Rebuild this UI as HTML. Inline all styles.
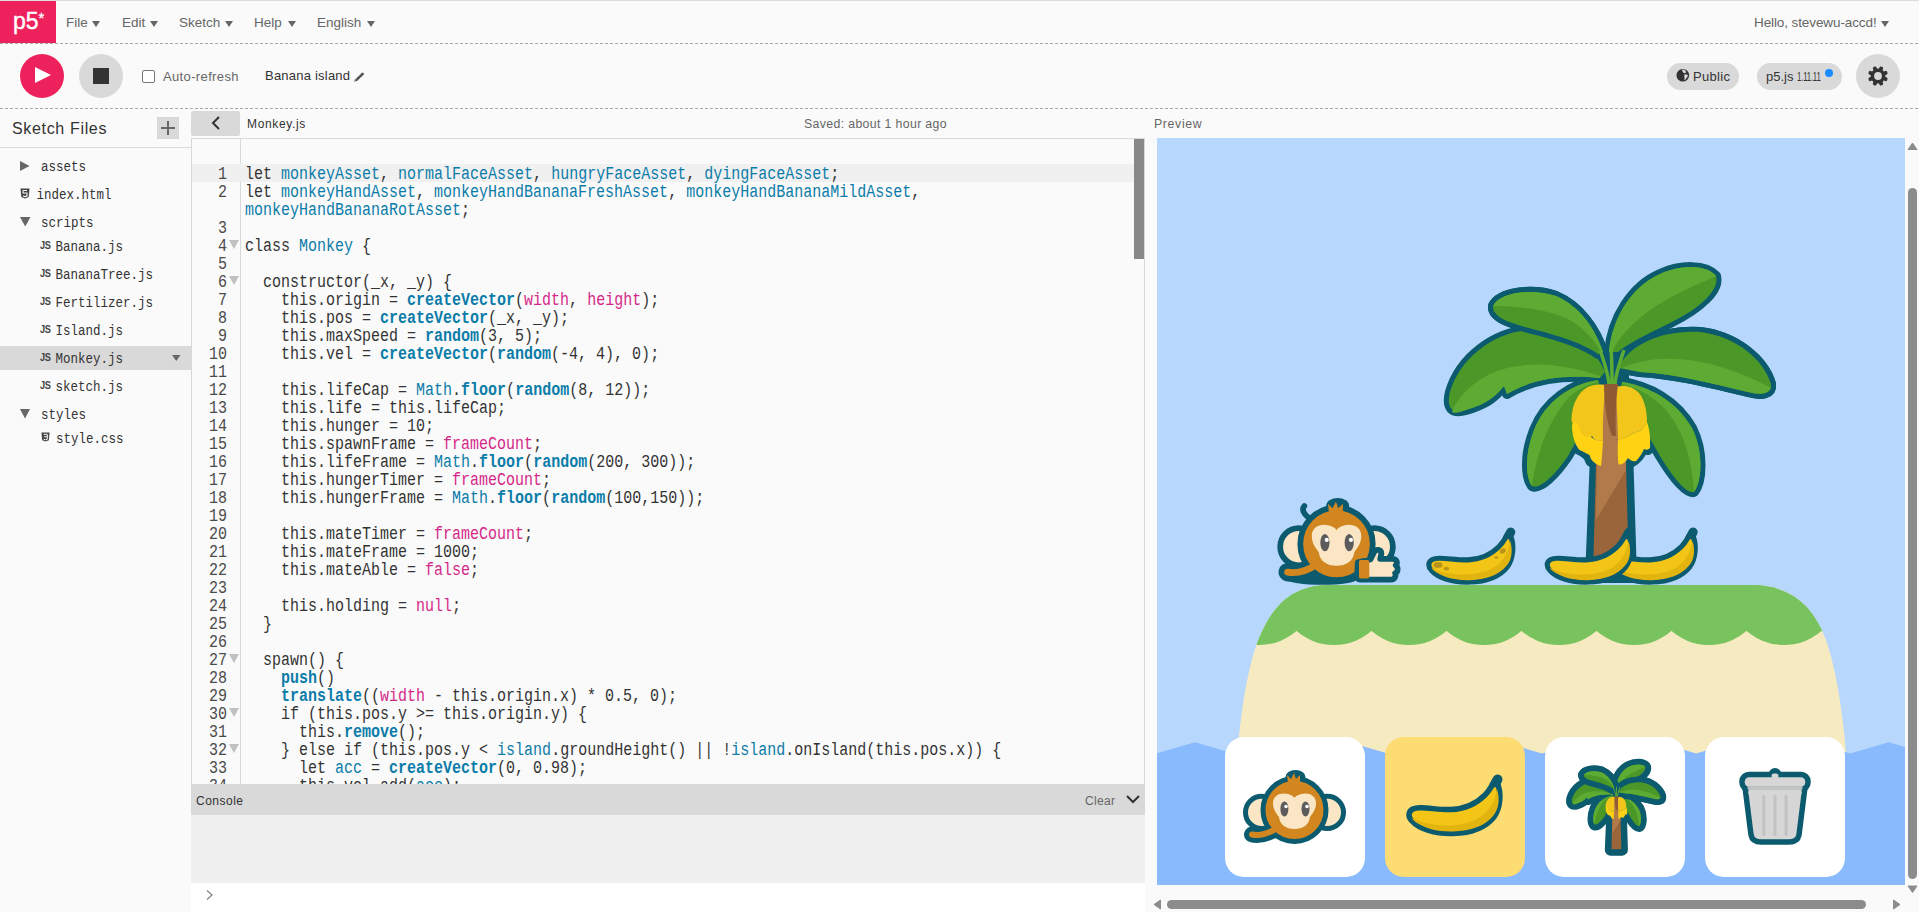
<!DOCTYPE html>
<html><head><meta charset="utf-8">
<style>
*{box-sizing:border-box;margin:0;padding:0}
html,body{width:1919px;height:912px;overflow:hidden;background:#fafafa;font-family:"Liberation Sans",sans-serif;color:#333}
.a{position:absolute}
.t{position:absolute;white-space:nowrap;line-height:1}
.tri{position:absolute;width:0;height:0;border-left:4.5px solid transparent;border-right:4.5px solid transparent;border-top:6.5px solid #666}
.dash{position:absolute;left:0;width:1919px;height:1px;background-image:linear-gradient(to right,#a6a6a6 0,#a6a6a6 3px,transparent 3px,transparent 5px);background-size:5px 1px}
.code{position:absolute;left:245px;font-family:"Liberation Mono",monospace;font-size:15px;line-height:18px;white-space:pre;color:#333}
.code div{height:18px}
.code span.in{display:inline-block;transform:scaleY(1.2);transform-origin:0 13px}
.code i,.code b{font-style:normal}
.k{color:#333}
.d{color:#0b7ca9}
.f{color:#0b7ca9;font-weight:bold}
.p{color:#d52889}
.gut{position:absolute;left:192px;width:48px;font-family:"Liberation Mono",monospace;font-size:15px;line-height:18px;white-space:pre;color:#4a4a4a;text-align:right}
.gut div{height:18px;padding-right:13px;position:relative}
.gut span.in{display:inline-block;transform:scaleY(1.2);transform-origin:0 13px}
.fold{position:absolute;left:37px;top:1px;width:0;height:0;border-left:5px solid transparent;border-right:5px solid transparent;border-top:9.5px solid #c0c0c0}
.jsi{position:absolute;font-family:"Liberation Sans",sans-serif;font-weight:bold;font-size:11.5px;line-height:1;color:#444;letter-spacing:-0.6px;transform:scaleX(0.8);transform-origin:0 0}
.fi{transform:scaleY(1.1);transform-origin:0 9.6px;position:absolute;font-family:"Liberation Mono",monospace;font-size:12.5px;line-height:1;white-space:pre;color:#333}
</style></head><body>
<!-- top line -->
<div class="a" style="left:0;top:0;width:1919px;height:1px;background:#dcdcdc"></div>
<!-- logo -->
<div class="a" style="left:0;top:1px;width:56px;height:42px;background:#ed225d"></div>
<div class="t" style="left:13px;top:10px;font-size:23px;color:#fff;-webkit-text-stroke:0.4px #fff">p5</div>
<div class="t" style="left:38.5px;top:10px;font-size:15px;color:#fff;-webkit-text-stroke:0.3px #fff">*</div>
<!-- nav -->
<div class="t" style="left:66px;top:16px;font-size:13.5px;color:#666">File</div><div class="tri" style="left:92px;top:21px"></div>
<div class="t" style="left:122px;top:16px;font-size:13.5px;color:#666">Edit</div><div class="tri" style="left:150px;top:21px"></div>
<div class="t" style="left:179px;top:16px;font-size:13.5px;color:#666">Sketch</div><div class="tri" style="left:225px;top:21px"></div>
<div class="t" style="left:254px;top:16px;font-size:13.5px;color:#666">Help</div><div class="tri" style="left:288px;top:21px"></div>
<div class="t" style="left:317px;top:16px;font-size:13.5px;color:#666">English</div><div class="tri" style="left:367px;top:21px"></div>
<div class="t" style="left:1754px;top:16px;font-size:13.5px;letter-spacing:-0.1px;color:#666">Hello, stevewu-accd!</div><div class="tri" style="left:1881px;top:21px"></div>
<div class="dash" style="top:43px"></div>
<!-- toolbar -->
<div class="a" style="left:20px;top:54px;width:44px;height:44px;border-radius:50%;background:#ed225d"></div>
<svg class="a" style="left:35px;top:67px" width="18" height="18"><path d="M0 0 L16 8 L0 16Z" fill="#fff"/></svg>
<div class="a" style="left:79px;top:54px;width:44px;height:44px;border-radius:50%;background:#d9d9d9"></div>
<div class="a" style="left:93px;top:68px;width:16px;height:16px;background:#333"></div>
<div class="a" style="left:142px;top:70px;width:13px;height:13px;border:1px solid #767676;border-radius:2px;background:#fff"></div>
<div class="t" style="left:163px;top:70px;font-size:13px;letter-spacing:0.36px;color:#666">Auto-refresh</div>
<div class="t" style="left:265px;top:69px;font-size:13px;letter-spacing:0.22px;color:#333">Banana island</div>
<svg class="a" style="left:352px;top:70px" width="14" height="13" viewBox="0 0 14 13"><path d="M3.2 9.2 L10.4 2.2 L12.2 4 L5 11 L2 11.6 Z" fill="#444"/><path d="M4.2 9 L10.6 2.8 M3.4 10.6 L3.6 9.6" stroke="#fafafa" stroke-width="0.7" fill="none" stroke-dasharray="1 1"/></svg>
<div class="a" style="left:1667px;top:63px;width:72px;height:27px;border-radius:14px;background:#d9d9d9"></div>
<svg class="a" style="left:1676px;top:69px" width="14" height="14" viewBox="0 0 14 14"><circle cx="6.8" cy="6.3" r="6.3" fill="#333"/><path d="M6 0.8 L7.5 0.6 L9.5 1.8 L10.2 3.4 L8.6 4.2 L7.4 3.8 L6.6 2.6 Z M8.6 5.3 L10.6 5.6 L12 6.3 L11.2 8.2 L9.6 10.2 L8.2 11.5 L8.6 9.2 L8.2 7.4 Z" fill="#d9d9d9"/></svg>
<div class="t" style="left:1693px;top:70px;font-size:13px;letter-spacing:0.3px;color:#333">Public</div>
<div class="a" style="left:1757px;top:63px;width:85px;height:27px;border-radius:14px;background:#d9d9d9"></div>
<div class="t" style="left:1766px;top:70px;font-size:13px;color:#333">p5.js <span style="display:inline-block;transform:scaleX(0.6);transform-origin:0 0;letter-spacing:-0.3px">1.11.11</span></div>
<div class="a" style="left:1825px;top:69px;width:8px;height:8px;border-radius:50%;background:#1a8cff"></div>
<div class="a" style="left:1856px;top:54px;width:44px;height:44px;border-radius:50%;background:#d9d9d9"></div>
<svg class="a" style="left:1866px;top:64px" width="24" height="24" viewBox="-12 -12 24 24"><g fill="#333"><rect x="-1.9" y="-10" width="3.8" height="6" rx="1.3" transform="rotate(22.5)"/><rect x="-1.9" y="-10" width="3.8" height="6" rx="1.3" transform="rotate(67.5)"/><rect x="-1.9" y="-10" width="3.8" height="6" rx="1.3" transform="rotate(112.5)"/><rect x="-1.9" y="-10" width="3.8" height="6" rx="1.3" transform="rotate(157.5)"/><rect x="-1.9" y="-10" width="3.8" height="6" rx="1.3" transform="rotate(202.5)"/><rect x="-1.9" y="-10" width="3.8" height="6" rx="1.3" transform="rotate(247.5)"/><rect x="-1.9" y="-10" width="3.8" height="6" rx="1.3" transform="rotate(292.5)"/><rect x="-1.9" y="-10" width="3.8" height="6" rx="1.3" transform="rotate(337.5)"/><circle r="7.4"/></g><circle r="3.9" fill="#d9d9d9"/></svg>
<div class="dash" style="top:108px"></div>

<!-- sidebar -->
<div class="t" style="left:12px;top:121px;font-size:16px;letter-spacing:0.66px;color:#333">Sketch Files</div>
<div class="a" style="left:157px;top:117px;width:22px;height:22px;background:#d9d9d9"></div>
<div class="a" style="left:161px;top:127px;width:14px;height:2px;background:#666"></div>
<div class="a" style="left:167px;top:121px;width:2px;height:14px;background:#666"></div>
<div class="a" style="left:0;top:147px;width:191px;height:1px;background:#d9d9d9"></div>
<div class="a" style="left:191px;top:138px;width:1px;height:774px;background:#e6e6e6"></div>
<div class="a" style="left:0;top:346px;width:191px;height:24px;background:#d9d9d9"></div>

<!-- editor header -->
<div class="a" style="left:191px;top:111px;width:49px;height:25px;border-radius:2px;background:#d9d9d9"></div>
<svg class="a" style="left:210px;top:115px" width="14" height="16"><path d="M9 2 L3 8 L9 14" fill="none" stroke="#333" stroke-width="2"/></svg>
<div class="t" style="left:247px;top:118px;font-size:12px;letter-spacing:0.65px;color:#333">Monkey.js</div>
<div class="t" style="left:804px;top:118px;font-size:12.3px;letter-spacing:0.36px;color:#666">Saved: about 1 hour ago</div>
<div class="t" style="left:1154px;top:118px;font-size:12.3px;letter-spacing:0.65px;color:#666">Preview</div>

<!-- editor -->
<div class="a" style="left:191px;top:138px;width:954px;height:646px;border:1px solid #d9d9d9;border-bottom:none;background:#fafafa;overflow:hidden" id="ed"></div>
<div class="a" style="left:240px;top:139px;width:1px;height:645px;background:#d9d9d9"></div>
<div class="a" style="left:192px;top:164px;width:942px;height:18px;background:#f0f0f0"></div>
<div class="a" style="left:1134px;top:139px;width:10px;height:120px;background:#888"></div>

<!-- console -->
<div class="a" style="left:191px;top:784px;width:954px;height:31px;background:#d9d9d9"></div>
<div class="t" style="left:196px;top:795px;font-size:12px;letter-spacing:0.5px;color:#333">Console</div>
<div class="t" style="left:1085px;top:795px;font-size:12px;letter-spacing:0.3px;color:#666">Clear</div>
<svg class="a" style="left:1125px;top:794px" width="16" height="12"><path d="M2 2 L8 8 L14 2" fill="none" stroke="#333" stroke-width="2"/></svg>
<div class="a" style="left:191px;top:815px;width:954px;height:68px;background:#f0f0f0"></div>
<div class="a" style="left:191px;top:883px;width:954px;height:29px;background:#fff"></div>
<svg class="a" style="left:205px;top:889px" width="10" height="12"><path d="M2 1.5 L7 6 L2 10.5" fill="none" stroke="#888" stroke-width="1.3"/></svg>

<!-- SIDE -->
<svg class="a" style="left:20px;top:161px" width="10" height="10"><path d="M0 0 L9.5 5 L0 10Z" fill="#666"/></svg>
<div class="fi" style="left:41px;top:162.1px">assets</div>
<svg class="a" style="left:20px;top:188px" width="10" height="11" viewBox="0 0 10 11"><path d="M0.5 0.5 H9.5 L8.7 9 L5 10.5 L1.3 9 Z" fill="#444"/><path d="M3 2.5 H7 M3 2.5 V5 H7 V8 L5 8.6 L3 8" fill="none" stroke="#fafafa" stroke-width="1.1"/></svg>
<div class="fi" style="left:36.5px;top:190.0px">index.html</div>
<svg class="a" style="left:20px;top:217px" width="11" height="10"><path d="M0 0 L10.5 0 L5.25 9.5Z" fill="#666"/></svg>
<div class="fi" style="left:41px;top:218.1px">scripts</div>
<div class="jsi" style="left:40px;top:240px">JS</div><div class="fi" style="left:55.5px;top:242.0px">Banana.js</div>
<div class="jsi" style="left:40px;top:268px">JS</div><div class="fi" style="left:55.5px;top:270.0px">BananaTree.js</div>
<div class="jsi" style="left:40px;top:296px">JS</div><div class="fi" style="left:55.5px;top:298.0px">Fertilizer.js</div>
<div class="jsi" style="left:40px;top:324px">JS</div><div class="fi" style="left:55.5px;top:326.0px">Island.js</div>
<div class="jsi" style="left:40px;top:352px">JS</div><div class="fi" style="left:55.5px;top:354.0px">Monkey.js</div>
<svg class="a" style="left:172px;top:355px" width="9" height="6"><path d="M0 0 L8.5 0 L4.25 6Z" fill="#666"/></svg>
<div class="jsi" style="left:40px;top:380px">JS</div><div class="fi" style="left:55.5px;top:382.0px">sketch.js</div>
<svg class="a" style="left:20px;top:409px" width="11" height="10"><path d="M0 0 L10 0 L5 9.5Z" fill="#666"/></svg>
<div class="fi" style="left:41px;top:410.2px">styles</div>
<svg class="a" style="left:40.5px;top:432px" width="9" height="10" viewBox="0 0 10 11"><path d="M0.5 0.5 H9.5 L8.7 9 L5 10.5 L1.3 9 Z" fill="#444"/><path d="M3 2.5 H7 V8 L5 8.6 L3 8 M3.5 5.2 H7" fill="none" stroke="#fafafa" stroke-width="1.1"/></svg>
<div class="fi" style="left:56px;top:434.0px">style.css</div>
<!-- /SIDE -->
<!-- CODE --><div class="a" style="left:192px;top:139px;width:942px;height:645px;overflow:hidden"><div class="gut" style="left:0;top:28px"><div><span class="in">1</span></div><div><span class="in">2</span></div><div></div><div><span class="in">3</span></div><div><span class="in">4</span><b class="fold"></b></div><div><span class="in">5</span></div><div><span class="in">6</span><b class="fold"></b></div><div><span class="in">7</span></div><div><span class="in">8</span></div><div><span class="in">9</span></div><div><span class="in">10</span></div><div><span class="in">11</span></div><div><span class="in">12</span></div><div><span class="in">13</span></div><div><span class="in">14</span></div><div><span class="in">15</span></div><div><span class="in">16</span></div><div><span class="in">17</span></div><div><span class="in">18</span></div><div><span class="in">19</span></div><div><span class="in">20</span></div><div><span class="in">21</span></div><div><span class="in">22</span></div><div><span class="in">23</span></div><div><span class="in">24</span></div><div><span class="in">25</span></div><div><span class="in">26</span></div><div><span class="in">27</span><b class="fold"></b></div><div><span class="in">28</span></div><div><span class="in">29</span></div><div><span class="in">30</span><b class="fold"></b></div><div><span class="in">31</span></div><div><span class="in">32</span><b class="fold"></b></div><div><span class="in">33</span></div><div><span class="in">34</span></div></div><div class="code" style="left:53px;top:28px"><div><span class="in"><i class="k">let</i> <i class="d">monkeyAsset</i>, <i class="d">normalFaceAsset</i>, <i class="d">hungryFaceAsset</i>, <i class="d">dyingFaceAsset</i>;</span></div><div><span class="in"><i class="k">let</i> <i class="d">monkeyHandAsset</i>, <i class="d">monkeyHandBananaFreshAsset</i>, <i class="d">monkeyHandBananaMildAsset</i>,</span></div><div><span class="in"><i class="d">monkeyHandBananaRotAsset</i>;</span></div><div><span class="in"></span></div><div><span class="in"><i class="k">class</i> <i class="d">Monkey</i> {</span></div><div><span class="in"></span></div><div><span class="in">  constructor(_x, _y) {</span></div><div><span class="in">    <i class="k">this</i>.origin = <b class="f">createVector</b>(<i class="p">width</i>, <i class="p">height</i>);</span></div><div><span class="in">    <i class="k">this</i>.pos = <b class="f">createVector</b>(_x, _y);</span></div><div><span class="in">    <i class="k">this</i>.maxSpeed = <b class="f">random</b>(3, 5);</span></div><div><span class="in">    <i class="k">this</i>.vel = <b class="f">createVector</b>(<b class="f">random</b>(-4, 4), 0);</span></div><div><span class="in"></span></div><div><span class="in">    <i class="k">this</i>.lifeCap = <i class="d">Math</i>.<b class="f">floor</b>(<b class="f">random</b>(8, 12));</span></div><div><span class="in">    <i class="k">this</i>.life = <i class="k">this</i>.lifeCap;</span></div><div><span class="in">    <i class="k">this</i>.hunger = 10;</span></div><div><span class="in">    <i class="k">this</i>.spawnFrame = <i class="p">frameCount</i>;</span></div><div><span class="in">    <i class="k">this</i>.lifeFrame = <i class="d">Math</i>.<b class="f">floor</b>(<b class="f">random</b>(200, 300));</span></div><div><span class="in">    <i class="k">this</i>.hungerTimer = <i class="p">frameCount</i>;</span></div><div><span class="in">    <i class="k">this</i>.hungerFrame = <i class="d">Math</i>.<b class="f">floor</b>(<b class="f">random</b>(100,150));</span></div><div><span class="in"></span></div><div><span class="in">    <i class="k">this</i>.mateTimer = <i class="p">frameCount</i>;</span></div><div><span class="in">    <i class="k">this</i>.mateFrame = 1000;</span></div><div><span class="in">    <i class="k">this</i>.mateAble = <i class="p">false</i>;</span></div><div><span class="in"></span></div><div><span class="in">    <i class="k">this</i>.holding = <i class="p">null</i>;</span></div><div><span class="in">  }</span></div><div><span class="in"></span></div><div><span class="in">  spawn() {</span></div><div><span class="in">    <b class="f">push</b>()</span></div><div><span class="in">    <b class="f">translate</b>((<i class="p">width</i> - <i class="k">this</i>.origin.x) * 0.5, 0);</span></div><div><span class="in">    <i class="k">if</i> (<i class="k">this</i>.pos.y &gt;= <i class="k">this</i>.origin.y) {</span></div><div><span class="in">      <i class="k">this</i>.<b class="f">remove</b>();</span></div><div><span class="in">    } <i class="k">else</i> <i class="k">if</i> (<i class="k">this</i>.pos.y &lt; <i class="d">island</i>.groundHeight() || !<i class="d">island</i>.onIsland(<i class="k">this</i>.pos.x)) {</span></div><div><span class="in">      <i class="k">let</i> <i class="d">acc</i> = <b class="f">createVector</b>(0, 0.98);</span></div><div><span class="in">      <i class="k">this</i>.vel.add(<i class="d">acc</i>);</span></div></div></div><!-- /CODE -->
<!-- CANVAS --><svg class="a" style="left:1157px;top:138px" width="748" height="747" viewBox="1157 138 748 747">
<defs><clipPath id="isl"><path d="M1232 885 C1233 790 1238 700 1256 646 C1270 606 1292 585 1330 585 L1750 585 C1790 585 1812 604 1826 640 C1843 690 1850 770 1852 885 Z"/></clipPath></defs>
<rect x="1157" y="138" width="748" height="747" fill="#b8d7fc"/>
<path d="M1232 885 C1233 790 1238 700 1256 646 C1270 606 1292 585 1330 585 L1750 585 C1790 585 1812 604 1826 640 C1843 690 1850 770 1852 885 Z" fill="#f6eac1"/>
<g clip-path="url(#isl)" fill="#78c35e"><rect x="1150" y="580" width="760" height="8"/><circle cx="1184" cy="588" r="57"/><circle cx="1259" cy="588" r="57"/><circle cx="1334" cy="588" r="57"/><circle cx="1409" cy="588" r="57"/><circle cx="1484" cy="588" r="57"/><circle cx="1559" cy="588" r="57"/><circle cx="1634" cy="588" r="57"/><circle cx="1709" cy="588" r="57"/><circle cx="1784" cy="588" r="57"/><circle cx="1859" cy="588" r="57"/></g>
<path d="M1100,885 L1100,753.5 L1040.8,742.3 L1079.3,753.5 L1117.9,742.3 L1156.4,753.5 L1195.0,742.3 L1233.5,753.5 L1272.1,742.3 L1310.6,753.5 L1349.2,742.3 L1387.7,753.5 L1426.3,742.3 L1464.8,753.5 L1503.4,742.3 L1541.9,753.5 L1580.5,742.3 L1619.0,753.5 L1657.6,742.3 L1696.1,753.5 L1734.7,742.3 L1773.2,753.5 L1811.8,742.3 L1850.3,753.5 L1888.9,742.3 L1927.4,753.5 L1966.0,742.3 L2004.5,753.5 L2043.1,742.3 L2081.7,753.5 L2120.2,742.3 L2158.8,753.5 L2197.3,742.3 L2235.9,753.5 L1960,885 Z" fill="#89bafd"/>
<g transform="translate(0 0) scale(1)">
<path d="M1598 382 L1626 382 L1632 578 L1590 578 Z" fill="#0b5a6e" stroke="#0b5a6e" stroke-width="10" stroke-linejoin="round"/>
<path d="M1609 352 C1612 318 1632 286 1660 274 C1680 265 1706 264 1716 276 C1720 290 1700 308 1672 322 C1652 332 1630 342 1618 352 Z" fill="#0b5a6e" stroke="#0b5a6e" stroke-width="10" stroke-linejoin="round"/><path d="M1603 352 C1596 330 1580 306 1556 296 C1532 288 1500 292 1493 306 C1492 318 1512 324 1536 330 C1560 336 1584 344 1598 354 Z" fill="#0b5a6e" stroke="#0b5a6e" stroke-width="10" stroke-linejoin="round"/><path d="M1605 372 C1594 344 1566 330 1530 330 C1494 332 1460 358 1450 392 C1446 408 1452 414 1466 410 C1486 404 1494 398 1504 386 L1507 394 C1530 380 1560 374 1600 378 Z" fill="#0b5a6e" stroke="#0b5a6e" stroke-width="10" stroke-linejoin="round"/><path d="M1618 368 C1630 344 1662 330 1700 332 C1736 336 1764 360 1771 384 C1772 394 1762 396 1748 392 C1714 384 1676 374 1640 372 Z" fill="#0b5a6e" stroke="#0b5a6e" stroke-width="10" stroke-linejoin="round"/><path d="M1598 380 C1572 384 1546 400 1534 430 C1524 456 1526 478 1532 486 C1540 490 1556 474 1568 456 C1580 436 1590 410 1600 386 Z" fill="#0b5a6e" stroke="#0b5a6e" stroke-width="10" stroke-linejoin="round"/><path d="M1622 382 C1648 386 1676 400 1692 428 C1704 452 1702 482 1694 492 C1686 494 1672 476 1660 456 C1646 432 1634 410 1620 388 Z" fill="#0b5a6e" stroke="#0b5a6e" stroke-width="10" stroke-linejoin="round"/>
<path d="M1571.4 418 C1572 404 1578 392 1588 387 L1638 392 C1644 398 1647 410 1646 420.6 C1649 430 1650 444 1648 450 L1643 449 C1640 456 1636 460 1632 462 L1628 458 C1626 462 1622 464 1618 464 L1601.5 465 C1596 464 1592 462 1590.6 461.6 L1588 456 C1584 452 1580 450 1576.2 448.4 C1573 440 1571.4 432 1571.4 418 Z" fill="#0b5a6e" stroke="#0b5a6e" stroke-width="10" stroke-linejoin="round"/>
<path d="M1600 350 L1624 350 L1624 386 L1600 386 Z" fill="#0b5a6e" stroke="#0b5a6e" stroke-width="10" stroke-linejoin="round"/>
<path d="M1609 352 C1612 318 1632 286 1660 274 C1680 265 1706 264 1716 276 C1720 290 1700 308 1672 322 C1652 332 1630 342 1618 352 Z" fill="#4b9828"/><path d="M1609 352 C1612 318 1632 286 1660 274 C1680 265 1706 264 1716 276 C1690 288 1660 300 1640 318 C1626 330 1616 342 1612 352 Z" fill="#5eab34"/><path d="M1598 380 C1572 384 1546 400 1534 430 C1524 456 1526 478 1532 486 C1540 490 1556 474 1568 456 C1580 436 1590 410 1600 386 Z" fill="#4b9828"/><path d="M1598 380 C1572 384 1546 400 1534 430 C1524 456 1526 478 1532 486 C1536 456 1548 420 1570 396 C1580 388 1590 384 1598 382 Z" fill="#5eab34"/><path d="M1622 382 C1648 386 1676 400 1692 428 C1704 452 1702 482 1694 492 C1686 494 1672 476 1660 456 C1646 432 1634 410 1620 388 Z" fill="#4b9828"/><path d="M1622 382 C1648 386 1676 400 1692 428 C1704 452 1702 482 1694 492 C1692 460 1684 430 1664 408 C1652 396 1638 388 1622 384 Z" fill="#5eab34"/><path d="M1605 372 C1594 344 1566 330 1530 330 C1494 332 1460 358 1450 392 C1446 408 1452 414 1466 410 C1486 404 1494 398 1504 386 L1507 394 C1530 380 1560 374 1600 378 Z" fill="#4b9828"/><path d="M1600 376 C1560 362 1520 360 1490 374 C1470 384 1456 400 1452 412 C1456 414 1460 412 1466 410 C1486 404 1494 398 1504 386 L1507 394 C1530 380 1560 374 1600 378 Z" fill="#5eab34"/><path d="M1603 352 C1596 330 1580 306 1556 296 C1532 288 1500 292 1493 306 C1492 318 1512 324 1536 330 C1560 336 1584 344 1598 354 Z" fill="#0b5a6e" stroke="#0b5a6e" stroke-width="10" stroke-linejoin="round"/><path d="M1603 352 C1596 330 1580 306 1556 296 C1532 288 1500 292 1493 306 C1492 318 1512 324 1536 330 C1560 336 1584 344 1598 354 Z" fill="#4b9828"/><path d="M1603 352 C1596 330 1580 306 1556 296 C1532 288 1500 292 1493 306 C1520 306 1550 310 1570 320 C1586 330 1596 342 1601 352 Z" fill="#5eab34"/><path d="M1618 368 C1630 344 1662 330 1700 332 C1736 336 1764 360 1771 384 C1772 394 1762 396 1748 392 C1714 384 1676 374 1640 372 Z" fill="#0b5a6e" stroke="#0b5a6e" stroke-width="10" stroke-linejoin="round"/><path d="M1618 368 C1630 344 1662 330 1700 332 C1736 336 1764 360 1771 384 C1772 394 1762 396 1748 392 C1714 384 1676 374 1640 372 Z" fill="#4b9828"/><path d="M1622 368 C1660 352 1710 356 1771 388 C1768 394 1760 395 1748 392 C1714 384 1676 374 1640 372 Z" fill="#5eab34"/>
<path d="M1598 386 L1624 386 L1629 576 L1593 576 Z" fill="#9a653a"/>
<path d="M1598 386 L1624 386 L1626 470 L1596 520 Z" fill="#b07a4a"/>
<path d="M1600 350 C1604 362 1608 372 1609 384 M1611 348 C1612 360 1612 372 1612 384 M1624 350 C1620 362 1616 372 1615 384" stroke="#5eab34" stroke-width="3.5" fill="none"/>
<path d="M1571.4 420 C1572 404 1578 392 1588 387 C1596 384 1603 384 1606 386 C1603 405 1602.7 425 1603 440 C1598 442 1594 440 1592 436 C1588 440 1582 440 1580 434 C1577 430 1573 426 1571.4 420 Z" fill="#f2c61a"/>
<path d="M1572 425 C1574 420 1578 422 1580 430 C1582 436 1586 438 1590 436 C1594 440 1600 442 1603 440 C1602.5 450 1602 458 1601 466 C1597 465 1593 462 1591 459 L1589.5 455 C1587 454 1584 452 1582 451 C1580 450 1579 450 1578 448 C1574 442 1572 434 1572 425 Z" fill="#ffd213"/>
<path d="M1614.8 388 C1622 384 1632 386 1638 392 C1644 398 1647 410 1647 422 C1644 428 1640 432 1636 432 C1632 434 1626 438 1618 440 C1617.5 420 1617 400 1614.8 388 Z" fill="#f2c61a"/>
<path d="M1618 440 C1626 438 1632 434 1636 432 C1640 432 1644 428 1647 422 C1650 430 1650.5 440 1650 448 C1648 450 1646 450 1644 449 C1642 454 1639 458 1636 461 C1633 462 1630 460 1628 458 C1626 462 1622 465 1618.5 464.5 C1617.5 456 1617.5 448 1618 440 Z" fill="#ffd213"/>
<path d="M1604 384 L1618 384 C1616 400 1615 420 1616 436 L1612 436 C1606 420 1604 400 1604 384 Z" fill="#8f5a33"/>
</g>
<g transform="translate(1406.6 492.8) scale(0.925)">
<path d="M109 49 L112.5 42.5" stroke="#0b5a6e" stroke-width="10" stroke-linecap="round"/>
<path d="M24 78 C24 72 30 70.5 36 70.7 C46 71 56 73 66 72.5 C80 72 92 66 100 58 C104 54 106 50 108 47 L113 48 C116 56 116 70 109 80 C101 90 86 96 68 96.5 C50 97 34 92 27 84 C25 82 24 80 24 78 Z" fill="#f2c517" stroke="#0b5a6e" stroke-width="5.5" stroke-linejoin="round"/>
<path d="M27 81 C40 88 66 92 88 84 C102 78 110 66 112 52 C115 62 114 72 108 79 C100 89 86 94 68 94.5 C50 95 36 90 28 83 Z" fill="#e2b40f"/>
<ellipse cx="34" cy="78" rx="5" ry="3.2" fill="#b8951a"/><ellipse cx="43" cy="82" rx="3" ry="2" fill="#b8951a"/><ellipse cx="104" cy="63" rx="3.5" ry="2.5" transform="rotate(-40 104 63)" fill="#b8951a"/><ellipse cx="97" cy="70" rx="2" ry="1.3" fill="#b8951a"/>
</g>
<g transform="translate(1589 492.8) scale(0.925)">
<path d="M109 49 L112.5 42.5" stroke="#0b5a6e" stroke-width="10" stroke-linecap="round"/>
<path d="M24 78 C24 72 30 70.5 36 70.7 C46 71 56 73 66 72.5 C80 72 92 66 100 58 C104 54 106 50 108 47 L113 48 C116 56 116 70 109 80 C101 90 86 96 68 96.5 C50 97 34 92 27 84 C25 82 24 80 24 78 Z" fill="#f2c517" stroke="#0b5a6e" stroke-width="5.5" stroke-linejoin="round"/>
<path d="M27 81 C40 88 66 92 88 84 C102 78 110 66 112 52 C115 62 114 72 108 79 C100 89 86 94 68 94.5 C50 95 36 90 28 83 Z" fill="#e2b40f"/>

</g>
<g transform="translate(1525 492.8) scale(0.925)">
<path d="M109 49 L112.5 42.5" stroke="#0b5a6e" stroke-width="10" stroke-linecap="round"/>
<path d="M24 78 C24 72 30 70.5 36 70.7 C46 71 56 73 66 72.5 C80 72 92 66 100 58 C104 54 106 50 108 47 L113 48 C116 56 116 70 109 80 C101 90 86 96 68 96.5 C50 97 34 92 27 84 C25 82 24 80 24 78 Z" fill="#f2c517" stroke="#0b5a6e" stroke-width="5.5" stroke-linejoin="round"/>
<path d="M27 81 C40 88 66 92 88 84 C102 78 110 66 112 52 C115 62 114 72 108 79 C100 89 86 94 68 94.5 C50 95 36 90 28 83 Z" fill="#e2b40f"/>

</g>
<g transform="translate(1256.6 460) scale(1.15)"><path d="M45 50 C41 47 39 43 41.5 40" stroke="#0b5a6e" stroke-width="5" stroke-linecap="round" fill="none"/><ellipse cx="57" cy="104" rx="30" ry="4.5" fill="#0b5a6e"/>
<path d="M27 97.5 C35 99 43 97 52 91" fill="none" stroke="#0b5a6e" stroke-width="16" stroke-linecap="round"/>
<circle cx="36.7" cy="75.4" r="16.2" fill="#fae6c4" stroke="#0b5a6e" stroke-width="5"/>
<circle cx="102.3" cy="75.4" r="16.2" fill="#fae6c4" stroke="#0b5a6e" stroke-width="5"/>
<ellipse cx="70.5" cy="40" rx="10" ry="7" fill="#0b5a6e"/>
<circle cx="69.5" cy="73" r="31.5" fill="#d1861f" stroke="#0b5a6e" stroke-width="5"/>
<path d="M27 97.5 C35 99 43 97 52 91" fill="none" stroke="#d1861f" stroke-width="6" stroke-linecap="round"/>
<path d="M63 46 L62 38 L66 42 L69 36 L71 42 L75 38 L75 46 Z" fill="#d1861f"/>
<path d="M48 66 C48 58 56 55 63 57 C67 58 69 60 69.5 61 C70 60 72 58 76 57 C83 55 91 58 91 66 C91 72 88 76 85 80 C84 88 78 92 69.5 92 C61 92 55 88 54 80 C51 76 48 72 48 66 Z" fill="#fae6c4"/>
<ellipse cx="59.4" cy="71.9" rx="4" ry="7.5" fill="#5c5c5c"/>
<ellipse cx="80.5" cy="71.9" rx="4" ry="7.5" fill="#5c5c5c"/>
<circle cx="61" cy="69.5" r="1.8" fill="#fff"/><circle cx="82" cy="69.5" r="1.8" fill="#fff"/>
<path d="M88 89 L99 86.5 L102 80.5 C103.5 77 108.5 77.5 108.5 81.5 L107.5 86 L118 86 C122 86 123 89.5 121 91.5 C123.5 93.5 123 97.5 120.5 98.5 C121.5 101 120 104 117 104 L90 104 C88 104 87.5 102 87.5 100 Z" fill="#fae6c4" stroke="#0b5a6e" stroke-width="5" stroke-linejoin="round"/>
<rect x="89" y="87" width="9" height="16" rx="1.5" fill="#d1861f"/>
</g>
<rect x="1225" y="737" width="140" height="140" rx="19" fill="#fff"/>
<rect x="1385" y="737" width="140" height="140" rx="19" fill="#fddc74"/>
<rect x="1545" y="737" width="140" height="140" rx="19" fill="#fff"/>
<rect x="1705" y="737" width="140" height="140" rx="19" fill="#fff"/>
<g transform="translate(1225 737) scale(1)">
<path d="M27 97.5 C35 99 43 97 52 91" fill="none" stroke="#0b5a6e" stroke-width="16" stroke-linecap="round"/>
<circle cx="36.7" cy="75.4" r="16.2" fill="#fae6c4" stroke="#0b5a6e" stroke-width="5"/>
<circle cx="102.3" cy="75.4" r="16.2" fill="#fae6c4" stroke="#0b5a6e" stroke-width="5"/>
<ellipse cx="70.5" cy="40" rx="10" ry="7" fill="#0b5a6e"/>
<circle cx="69.5" cy="73" r="31.5" fill="#d1861f" stroke="#0b5a6e" stroke-width="5"/>
<path d="M27 97.5 C35 99 43 97 52 91" fill="none" stroke="#d1861f" stroke-width="6" stroke-linecap="round"/>
<path d="M63 46 L62 38 L66 42 L69 36 L71 42 L75 38 L75 46 Z" fill="#d1861f"/>
<path d="M48 66 C48 58 56 55 63 57 C67 58 69 60 69.5 61 C70 60 72 58 76 57 C83 55 91 58 91 66 C91 72 88 76 85 80 C84 88 78 92 69.5 92 C61 92 55 88 54 80 C51 76 48 72 48 66 Z" fill="#fae6c4"/>
<ellipse cx="59.4" cy="71.9" rx="4" ry="7.5" fill="#5c5c5c"/>
<ellipse cx="80.5" cy="71.9" rx="4" ry="7.5" fill="#5c5c5c"/>
<circle cx="61" cy="69.5" r="1.8" fill="#fff"/><circle cx="82" cy="69.5" r="1.8" fill="#fff"/>

</g>
<g transform="translate(1385 737) scale(1)">
<path d="M109 49 L112.5 42.5" stroke="#0b5a6e" stroke-width="10" stroke-linecap="round"/>
<path d="M24 78 C24 72 30 70.5 36 70.7 C46 71 56 73 66 72.5 C80 72 92 66 100 58 C104 54 106 50 108 47 L113 48 C116 56 116 70 109 80 C101 90 86 96 68 96.5 C50 97 34 92 27 84 C25 82 24 80 24 78 Z" fill="#f2c517" stroke="#0b5a6e" stroke-width="5.5" stroke-linejoin="round"/>
<path d="M27 81 C40 88 66 92 88 84 C102 78 110 66 112 52 C115 62 114 72 108 79 C100 89 86 94 68 94.5 C50 95 36 90 28 83 Z" fill="#e2b40f"/>

</g>
<g transform="translate(1173.35 690.95) scale(0.275)">
<path d="M1598 382 L1626 382 L1632 578 L1590 578 Z" fill="#0b5a6e" stroke="#0b5a6e" stroke-width="42" stroke-linejoin="round"/>
<path d="M1609 352 C1612 318 1632 286 1660 274 C1680 265 1706 264 1716 276 C1720 290 1700 308 1672 322 C1652 332 1630 342 1618 352 Z" fill="#0b5a6e" stroke="#0b5a6e" stroke-width="42" stroke-linejoin="round"/><path d="M1603 352 C1596 330 1580 306 1556 296 C1532 288 1500 292 1493 306 C1492 318 1512 324 1536 330 C1560 336 1584 344 1598 354 Z" fill="#0b5a6e" stroke="#0b5a6e" stroke-width="42" stroke-linejoin="round"/><path d="M1605 372 C1594 344 1566 330 1530 330 C1494 332 1460 358 1450 392 C1446 408 1452 414 1466 410 C1486 404 1494 398 1504 386 L1507 394 C1530 380 1560 374 1600 378 Z" fill="#0b5a6e" stroke="#0b5a6e" stroke-width="42" stroke-linejoin="round"/><path d="M1618 368 C1630 344 1662 330 1700 332 C1736 336 1764 360 1771 384 C1772 394 1762 396 1748 392 C1714 384 1676 374 1640 372 Z" fill="#0b5a6e" stroke="#0b5a6e" stroke-width="42" stroke-linejoin="round"/><path d="M1598 380 C1572 384 1546 400 1534 430 C1524 456 1526 478 1532 486 C1540 490 1556 474 1568 456 C1580 436 1590 410 1600 386 Z" fill="#0b5a6e" stroke="#0b5a6e" stroke-width="42" stroke-linejoin="round"/><path d="M1622 382 C1648 386 1676 400 1692 428 C1704 452 1702 482 1694 492 C1686 494 1672 476 1660 456 C1646 432 1634 410 1620 388 Z" fill="#0b5a6e" stroke="#0b5a6e" stroke-width="42" stroke-linejoin="round"/>
<path d="M1571.4 418 C1572 404 1578 392 1588 387 L1638 392 C1644 398 1647 410 1646 420.6 C1649 430 1650 444 1648 450 L1643 449 C1640 456 1636 460 1632 462 L1628 458 C1626 462 1622 464 1618 464 L1601.5 465 C1596 464 1592 462 1590.6 461.6 L1588 456 C1584 452 1580 450 1576.2 448.4 C1573 440 1571.4 432 1571.4 418 Z" fill="#0b5a6e" stroke="#0b5a6e" stroke-width="42" stroke-linejoin="round"/>
<path d="M1600 350 L1624 350 L1624 386 L1600 386 Z" fill="#0b5a6e" stroke="#0b5a6e" stroke-width="42" stroke-linejoin="round"/>
<path d="M1609 352 C1612 318 1632 286 1660 274 C1680 265 1706 264 1716 276 C1720 290 1700 308 1672 322 C1652 332 1630 342 1618 352 Z" fill="#4b9828"/><path d="M1609 352 C1612 318 1632 286 1660 274 C1680 265 1706 264 1716 276 C1690 288 1660 300 1640 318 C1626 330 1616 342 1612 352 Z" fill="#5eab34"/><path d="M1598 380 C1572 384 1546 400 1534 430 C1524 456 1526 478 1532 486 C1540 490 1556 474 1568 456 C1580 436 1590 410 1600 386 Z" fill="#4b9828"/><path d="M1598 380 C1572 384 1546 400 1534 430 C1524 456 1526 478 1532 486 C1536 456 1548 420 1570 396 C1580 388 1590 384 1598 382 Z" fill="#5eab34"/><path d="M1622 382 C1648 386 1676 400 1692 428 C1704 452 1702 482 1694 492 C1686 494 1672 476 1660 456 C1646 432 1634 410 1620 388 Z" fill="#4b9828"/><path d="M1622 382 C1648 386 1676 400 1692 428 C1704 452 1702 482 1694 492 C1692 460 1684 430 1664 408 C1652 396 1638 388 1622 384 Z" fill="#5eab34"/><path d="M1605 372 C1594 344 1566 330 1530 330 C1494 332 1460 358 1450 392 C1446 408 1452 414 1466 410 C1486 404 1494 398 1504 386 L1507 394 C1530 380 1560 374 1600 378 Z" fill="#4b9828"/><path d="M1600 376 C1560 362 1520 360 1490 374 C1470 384 1456 400 1452 412 C1456 414 1460 412 1466 410 C1486 404 1494 398 1504 386 L1507 394 C1530 380 1560 374 1600 378 Z" fill="#5eab34"/><path d="M1603 352 C1596 330 1580 306 1556 296 C1532 288 1500 292 1493 306 C1492 318 1512 324 1536 330 C1560 336 1584 344 1598 354 Z" fill="#0b5a6e" stroke="#0b5a6e" stroke-width="42" stroke-linejoin="round"/><path d="M1603 352 C1596 330 1580 306 1556 296 C1532 288 1500 292 1493 306 C1492 318 1512 324 1536 330 C1560 336 1584 344 1598 354 Z" fill="#4b9828"/><path d="M1603 352 C1596 330 1580 306 1556 296 C1532 288 1500 292 1493 306 C1520 306 1550 310 1570 320 C1586 330 1596 342 1601 352 Z" fill="#5eab34"/><path d="M1618 368 C1630 344 1662 330 1700 332 C1736 336 1764 360 1771 384 C1772 394 1762 396 1748 392 C1714 384 1676 374 1640 372 Z" fill="#0b5a6e" stroke="#0b5a6e" stroke-width="42" stroke-linejoin="round"/><path d="M1618 368 C1630 344 1662 330 1700 332 C1736 336 1764 360 1771 384 C1772 394 1762 396 1748 392 C1714 384 1676 374 1640 372 Z" fill="#4b9828"/><path d="M1622 368 C1660 352 1710 356 1771 388 C1768 394 1760 395 1748 392 C1714 384 1676 374 1640 372 Z" fill="#5eab34"/>
<path d="M1598 386 L1624 386 L1629 576 L1593 576 Z" fill="#9a653a"/>
<path d="M1598 386 L1624 386 L1626 470 L1596 520 Z" fill="#b07a4a"/>
<path d="M1600 350 C1604 362 1608 372 1609 384 M1611 348 C1612 360 1612 372 1612 384 M1624 350 C1620 362 1616 372 1615 384" stroke="#5eab34" stroke-width="3.5" fill="none"/>
<path d="M1571.4 420 C1572 404 1578 392 1588 387 C1596 384 1603 384 1606 386 C1603 405 1602.7 425 1603 440 C1598 442 1594 440 1592 436 C1588 440 1582 440 1580 434 C1577 430 1573 426 1571.4 420 Z" fill="#f2c61a"/>
<path d="M1572 425 C1574 420 1578 422 1580 430 C1582 436 1586 438 1590 436 C1594 440 1600 442 1603 440 C1602.5 450 1602 458 1601 466 C1597 465 1593 462 1591 459 L1589.5 455 C1587 454 1584 452 1582 451 C1580 450 1579 450 1578 448 C1574 442 1572 434 1572 425 Z" fill="#ffd213"/>
<path d="M1614.8 388 C1622 384 1632 386 1638 392 C1644 398 1647 410 1647 422 C1644 428 1640 432 1636 432 C1632 434 1626 438 1618 440 C1617.5 420 1617 400 1614.8 388 Z" fill="#f2c61a"/>
<path d="M1618 440 C1626 438 1632 434 1636 432 C1640 432 1644 428 1647 422 C1650 430 1650.5 440 1650 448 C1648 450 1646 450 1644 449 C1642 454 1639 458 1636 461 C1633 462 1630 460 1628 458 C1626 462 1622 465 1618.5 464.5 C1617.5 456 1617.5 448 1618 440 Z" fill="#ffd213"/>
<path d="M1604 384 L1618 384 C1616 400 1615 420 1616 436 L1612 436 C1606 420 1604 400 1604 384 Z" fill="#8f5a33"/>
</g>
<g transform="translate(1705 737) scale(1)">
<path d="M40 50 L46 98 C47 103 51 105 56 105 L84 105 C89 105 93 103 94 98 L100 50 Z" fill="#d6d6d6" stroke="#0b5a6e" stroke-width="5.5" stroke-linejoin="round"/>
<circle cx="70" cy="37.5" r="6.5" fill="#0b5a6e"/>
<rect x="37" y="37.5" width="66" height="15" rx="7" fill="#d6d6d6" stroke="#0b5a6e" stroke-width="5.5"/>
<rect x="66.5" y="36.5" width="7" height="5" rx="2.5" fill="#d6d6d6"/>
<rect x="42.6" y="49.3" width="54.8" height="3" fill="#c4c4c4"/>
<rect x="43.4" y="52.2" width="53.2" height="4.6" fill="#d6d6d6"/>
<rect x="57.3" y="58" width="3" height="41" rx="1.5" fill="#c2c2c2"/>
<rect x="68.5" y="58" width="3" height="41" rx="1.5" fill="#c2c2c2"/>
<rect x="79.6" y="58" width="3" height="41" rx="1.5" fill="#c2c2c2"/>
</g>
</svg>
<div class="a" style="left:1905px;top:138px;width:14px;height:747px;background:#fafafa"></div>
<svg class="a" style="left:1907px;top:142px" width="11" height="9"><path d="M1 7.5 L5.5 1 L10 7.5Z" fill="#8c8c8c" stroke="#8c8c8c" stroke-linejoin="round"/></svg>
<div class="a" style="left:1908px;top:188px;width:9px;height:691px;border-radius:4.5px;background:#8c8c8c"></div>
<svg class="a" style="left:1907px;top:885px" width="11" height="9"><path d="M1 1 L5.5 7.5 L10 1Z" fill="#8c8c8c" stroke="#8c8c8c" stroke-linejoin="round"/></svg>
<svg class="a" style="left:1152px;top:899px" width="10" height="11"><path d="M8.5 1 L2 5.5 L8.5 10Z" fill="#8c8c8c" stroke="#8c8c8c" stroke-linejoin="round"/></svg>
<div class="a" style="left:1167px;top:900px;width:699px;height:9px;border-radius:4.5px;background:#8c8c8c"></div>
<svg class="a" style="left:1892px;top:899px" width="10" height="11"><path d="M1.5 1 L8 5.5 L1.5 10Z" fill="#8c8c8c" stroke="#8c8c8c" stroke-linejoin="round"/></svg>
<!-- /CANVAS -->
</body></html>
